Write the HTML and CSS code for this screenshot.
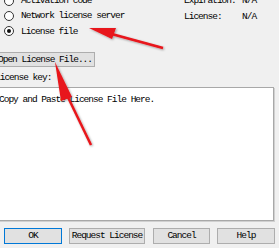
FILE: index.html
```html
<!DOCTYPE html>
<html>
<head>
<meta charset="utf-8">
<link rel="stylesheet" href="styles.css">
</head>
<body>
<div class="dialog">
  <div class="top">
    <div class="radios">
      <div class="radio-row"><span class="radio"></span><span>Activation code</span></div>
      <div class="radio-row"><span class="radio"></span><span>Network license server</span></div>
      <div class="radio-row"><span class="radio checked"></span><span>License file</span></div>
    </div>
    <div class="info">
      <span>Expiration:</span><span>N/A</span>
      <span>License:</span><span>N/A</span>
    </div>
  </div>
  <div class="open-row"><button class="btn open-btn">Open License File...</button></div>
  <div class="key-label">License key:</div>
  <div class="keybox">Copy and Paste License File Here.</div>
  <div class="actions">
    <button class="btn btn-ok">OK</button>
    <button class="btn btn-req">Request License</button>
    <button class="btn btn-cancel">Cancel</button>
    <button class="btn btn-help">Help</button>
  </div>
  <svg class="arrows" width="279" height="248" viewBox="0 0 279 248">
    <defs>
      <filter id="sh" x="-20%" y="-20%" width="140%" height="140%">
        <feDropShadow dx="1" dy="1" stdDeviation="1" flood-color="#000" flood-opacity="0.35"/>
      </filter>
    </defs>
    <g filter="url(#sh)" fill="#e8141a" stroke="#e8141a">
      <line x1="163" y1="55" x2="108" y2="40" stroke-width="2.5"/>
      <polygon points="89,35 116,35 112,46" stroke="none"/>
      <line x1="91" y1="152" x2="64" y2="96" stroke-width="2.5"/>
      <polygon points="55,69 72,104 61,108" stroke="none"/>
    </g>
  </svg>
</div>
</body>
</html>
```

FILE: styles.css
```css
* { box-sizing: border-box; }
html, body {
  margin: 0;
  padding: 0;
}
body {
  background: #f0f0f0;
  width: 279px;
  height: 248px;
  overflow: hidden;
  font-family: "Liberation Mono", "DejaVu Sans Mono", monospace;
  font-size: 9.5px;
  letter-spacing: -1px;
  color: #000;
}
.dialog {
  position: relative;
  width: 279px;
  height: 248px;
}
.top {
  display: flex;
  margin-top: -7px;
}
.radios {
  display: flex;
  flex-direction: column;
  padding-left: 4px;
  width: 180px;
}
.radio-row {
  display: flex;
  align-items: center;
  height: 15.25px;
  gap: 7px;
}
.radio {
  width: 10px;
  height: 10px;
  border-radius: 50%;
  border: 1px solid #333;
  background: #fff;
  position: relative;
  flex: none;
}
.radio.checked::after {
  content: "";
  position: absolute;
  left: 2px;
  top: 2px;
  width: 4px;
  height: 4px;
  border-radius: 50%;
  background: #111;
}
.info {
  display: grid;
  grid-template-columns: 58px auto;
  grid-auto-rows: 16px;
  align-items: center;
  margin-left: 4px;
  margin-top: -1px;
}
.open-row {
  display: flex;
  margin-top: 13px;
  margin-left: -7px;
}
.btn {
  font-family: inherit;
  font-size: 9.5px;
  letter-spacing: -1px;
  color: #000;
  background: #e1e1e1;
  border: 1px solid #adadad;
  padding: 0;
  margin: 0;
  height: 15px;
  display: flex;
  align-items: center;
  justify-content: center;
}
.open-btn {
  width: 102px;
  padding-left: 2px;
}
.key-label {
  margin-top: 6px;
  margin-left: -5px;
  height: 10px;
  line-height: 10px;
}
.keybox {
  margin-top: 4px;
  margin-left: -6px;
  width: 280px;
  height: 134px;
  background: #fff;
  border: 1px solid #a8a8a8;
  box-shadow: 1px 1px 0 #d0d0d0;
  padding: 7px 0 0 4px;
  line-height: 9px;
}
.actions {
  display: flex;
  gap: 7px;
  margin-top: 7px;
  padding-left: 4px;
}
.btn-ok {
  width: 58px;
  height: 16px;
  border-color: #0078d7;
}
.btn-req { width: 76px; height: 16px; }
.btn-cancel { width: 57px; height: 16px; margin-left: 1px; }
.btn-help { width: 58px; height: 16px; }
.arrows {
  position: absolute;
  left: 0;
  top: 0;
  pointer-events: none;
}
```
